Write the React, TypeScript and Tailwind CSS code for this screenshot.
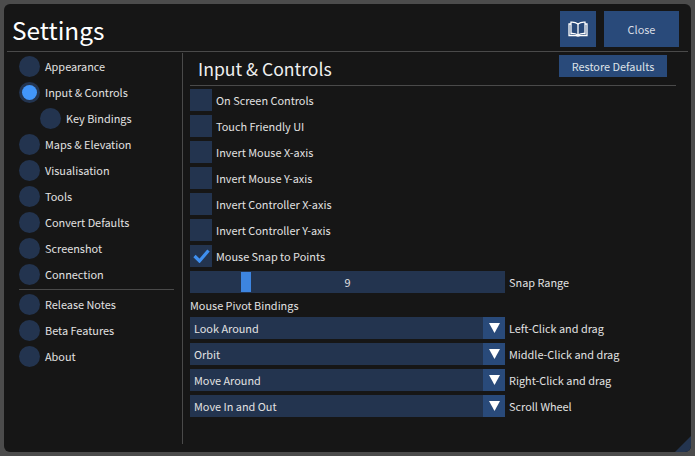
const sans = "font-['Noto_Sans_CJK_SC','Noto_Sans',sans-serif]";

function Radio(props: { label: string; active?: boolean; sub?: boolean }) {
  return (
    <div className={`flex h-[26px] items-center gap-[5px] ${props.sub ? "pl-[21px]" : ""}`}>
      <span className="flex h-[21px] w-[21px] items-center justify-center rounded-full bg-[#23344f]">
        {props.active && <span className="h-[15px] w-[15px] rounded-full bg-[#4296fa]" />}
      </span>
      <span>{props.label}</span>
    </div>
  );
}

function Check(props: { label: string; checked?: boolean }) {
  return (
    <div className="flex h-[26px] items-center gap-1">
      <span className="flex h-[22px] w-[22px] items-center justify-center bg-[#23344f]">
        {props.checked && (
          <svg width="17" height="14" viewBox="0 0 17 14">
            <path d="M1.5 7 L6.5 12 L15.5 1.5" fill="none" stroke="#3f8fef" strokeWidth="3.2" />
          </svg>
        )}
      </span>
      <span>{props.label}</span>
    </div>
  );
}

function Select(props: { value: string; label: string }) {
  return (
    <div className="flex h-[26px] items-center gap-1">
      <div className="flex h-[22px] w-[315px] items-center bg-[#23344f]">
        <span className="flex-1 pl-1">{props.value}</span>
        <span className="flex h-[22px] w-[22px] items-center justify-center bg-[#294a7a]">
          <svg width="11" height="10" viewBox="0 0 11 10">
            <path d="M0 0 H11 L5.5 10 Z" fill="#fff" />
          </svg>
        </span>
      </div>
      <span>{props.label}</span>
    </div>
  );
}

export default function App() {
  return (
    <div className={`h-[456px] w-[695px] overflow-hidden bg-[#4c4c4c] p-1 text-[10.9px] leading-4 text-[#e2e2e2] ${sans}`}>
      <div className="relative flex h-[448px] flex-col overflow-hidden rounded-[6px] bg-[#161616]">
        <div className="mx-[3px] flex h-[48px] items-start justify-between border-b border-[#4a4a4a] pr-[9px] pl-[5px]">
          <h1 className="mt-[8px] text-[24.4px] leading-[36px] text-white">Settings</h1>
          <div className="mt-[7px] flex gap-2">
            <button className="flex h-[36px] w-[36px] items-center justify-center bg-[#294a7a]">
              <svg width="20" height="16" viewBox="0 0 20 16" fill="none" stroke="#fff" strokeWidth="1.3">
                <path d="M10 3 C8 1.5 5.5 1 3 1.2 V12.5 C5.5 12.3 8 12.8 10 14 C12 12.8 14.5 12.3 17 12.5 V1.2 C14.5 1 12 1.5 10 3 Z" />
                <path d="M10 3 V14" />
                <path d="M3 3 H1 V14.5 H8 L10 15 L12 14.5 H19 V3 H17" />
              </svg>
            </button>
            <button className="h-[36px] w-[75px] bg-[#294a7a] text-[#d8dde4]">Close</button>
          </div>
        </div>
        <div className="flex min-h-0 flex-1">
          <div className="ml-[15px] mt-[1px] mb-2 w-[164px] border-r border-[#4a4a4a] pr-2">
            <div>
              <Radio label="Appearance" />
              <Radio label="Input & Controls" active />
              <Radio label="Key Bindings" sub />
              <Radio label="Maps & Elevation" />
              <Radio label="Visualisation" />
              <Radio label="Tools" />
              <Radio label="Convert Defaults" />
              <Radio label="Screenshot" />
              <Radio label="Connection" />
            </div>
            <div className="mt-[2px] mb-[1px] h-px bg-[#4a4a4a]" />
            <Radio label="Release Notes" />
            <Radio label="Beta Features" />
            <Radio label="About" />
          </div>
          <div className="ml-[7px] flex-1 pr-[11px]">
            <div className="relative mr-[4px] h-[34px] border-b border-[#4a4a4a] pl-2">
              <h2 className="pt-[4px] text-[17.6px] leading-[26px] text-[#f0f0f0]">Input & Controls</h2>
              <button className="absolute top-[3px] right-[9px] h-[22px] w-[108px] bg-[#294a7a] text-[#dfe3e8]">Restore Defaults</button>
            </div>
            <div className="mt-[1px]">
              <Check label="On Screen Controls" />
              <Check label="Touch Friendly UI" />
              <Check label="Invert Mouse X-axis" />
              <Check label="Invert Mouse Y-axis" />
              <Check label="Invert Controller X-axis" />
              <Check label="Invert Controller Y-axis" />
              <Check label="Mouse Snap to Points" checked />
            </div>
            <div className="flex h-[26px] items-center gap-1">
              <div className="relative flex h-[22px] w-[315px] items-center justify-center bg-[#23344f]">
                <span className="absolute top-[1px] bottom-[1px] left-[51px] w-[10px] bg-[#3d85e0]" />
                <span>9</span>
              </div>
              <span>Snap Range</span>
            </div>
            <div className="flex h-[20px] items-center">Mouse Pivot Bindings</div>
            <div>
              <Select value="Look Around" label="Left-Click and drag" />
              <Select value="Orbit" label="Middle-Click and drag" />
              <Select value="Move Around" label="Right-Click and drag" />
              <Select value="Move In and Out" label="Scroll Wheel" />
            </div>
          </div>
        </div>
        <div className="absolute right-0 bottom-0 h-[16px] w-[16px] bg-[#23344f] [clip-path:polygon(100%_0,100%_100%,0_100%)]" />
      </div>
    </div>
  );
}
